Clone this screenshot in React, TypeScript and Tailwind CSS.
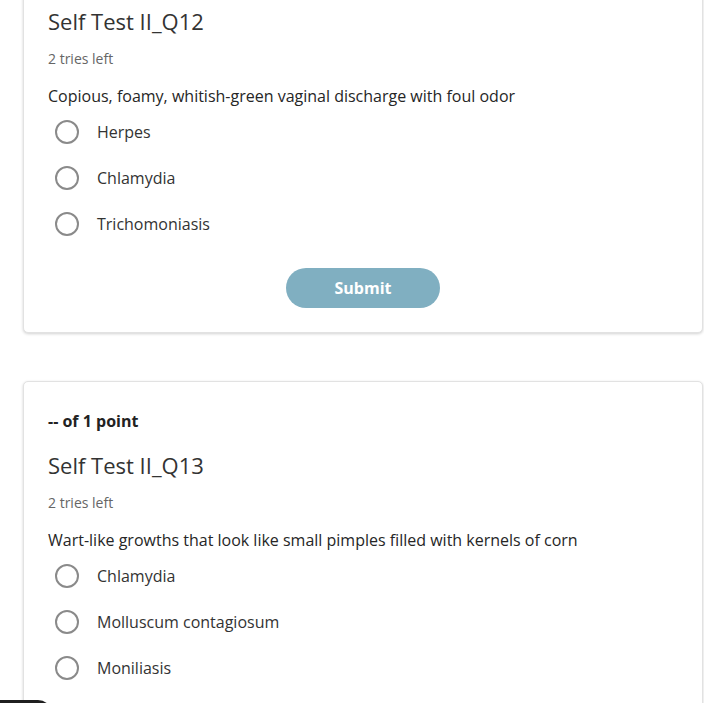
import { useState } from "react";

interface Question {
  id: string;
  title: string;
  prompt: string;
  options: string[];
}

const questions: Question[] = [
  {
    id: "q12",
    title: "Self Test II_Q12",
    prompt: "Copious, foamy, whitish-green vaginal discharge with foul odor",
    options: ["Herpes", "Chlamydia", "Trichomoniasis"],
  },
  {
    id: "q13",
    title: "Self Test II_Q13",
    prompt: "Wart-like growths that look like small pimples filled with kernels of corn",
    options: ["Chlamydia", "Molluscum contagiosum", "Moniliasis"],
  },
];

function QuestionCard({ q }: { q: Question }) {
  const [picked, setPicked] = useState<string | null>(null);

  return (
    <section className="ml-[23px] w-[680px] rounded-[5px] border border-[#e2e2e2] bg-white px-6 pt-[27px] pb-6 shadow-[0_1px_3px_rgba(0,0,0,0.18)]">
      <div className="text-[16px] leading-6 font-bold text-[#222]">-- of 1 point</div>
      <h2 className="mt-[17px] text-[22px] leading-[30px] font-normal text-[#333]">{q.title}</h2>
      <div className="mt-[13px] text-[14px] leading-5 text-[#666]">2 tries left</div>
      <p className="mt-[15px] text-[16px] leading-6 text-[#262626]">{q.prompt}</p>
      <div className="mt-px flex flex-col">
        {q.options.map((opt) => (
          <label key={opt} className="flex h-[46px] cursor-pointer items-center pl-[7px]">
            <input
              type="radio"
              name={q.id}
              checked={picked === opt}
              onChange={() => setPicked(opt)}
              className="sr-only"
            />
            <span className="flex h-6 w-6 items-center justify-center rounded-full border-2 border-[#8a8a8a]">
              {picked === opt && <span className="h-3 w-3 rounded-full bg-[#555]" />}
            </span>
            <span className="ml-[18px] text-[16px] text-[#333]">{opt}</span>
          </label>
        ))}
      </div>
      <div className="mt-[21px] flex justify-center">
        <button
          type="button"
          className="h-10 w-[154px] rounded-full bg-[#80afc1] text-[16px] font-bold text-white"
        >
          Submit
        </button>
      </div>
    </section>
  );
}

export default function App() {
  return (
    <div className="relative h-[703px] overflow-hidden bg-white font-['Open_Sans',sans-serif]">
      <div className="-mt-[63px] flex flex-col gap-[48px]">
        {questions.map((q) => (
          <QuestionCard key={q.id} q={q} />
        ))}
      </div>
      <div className="absolute left-[-10px] top-[700px] h-8 w-[62px] rounded-tr-[14px] bg-[#1f1f1f]" />
    </div>
  );
}
